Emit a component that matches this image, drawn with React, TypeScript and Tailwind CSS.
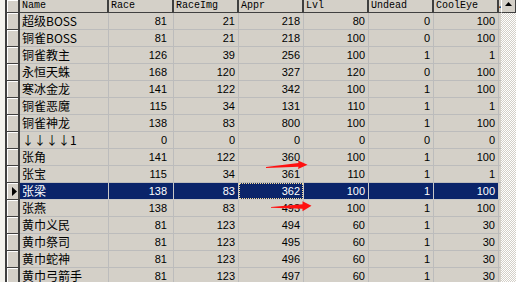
import React from "react";

type Row = [string, number, number, number, number, number, number];

const rows: Row[] = [
  ["超级BOSS", 81, 21, 218, 80, 0, 100],
  ["铜雀BOSS", 81, 21, 218, 100, 0, 100],
  ["铜雀教主", 126, 39, 256, 100, 1, 1],
  ["永恒天蛛", 168, 120, 327, 120, 0, 100],
  ["寒冰金龙", 141, 122, 342, 100, 1, 100],
  ["铜雀恶魔", 115, 34, 131, 110, 1, 1],
  ["铜雀神龙", 138, 83, 800, 100, 1, 100],
  ["↓↓↓↓1", 0, 0, 0, 0, 0, 0],
  ["张角", 141, 122, 360, 100, 1, 100],
  ["张宝", 115, 34, 361, 110, 1, 1],
  ["张梁", 138, 83, 362, 100, 1, 100],
  ["张燕", 138, 83, 493, 100, 1, 100],
  ["黄巾义民", 81, 123, 494, 60, 1, 30],
  ["黄巾祭司", 81, 123, 495, 60, 1, 30],
  ["黄巾蛇神", 81, 123, 496, 60, 1, 30],
  ["黄巾弓箭手", 81, 123, 497, 60, 1, 30],
];

const SELECTED = 10;
const HEADERS = ["Name", "Race", "RaceImg", "Appr", "Lvl", "Undead", "CoolEye"];
const GRID = "grid grid-cols-[13px_89px_65px_65px_65px_65px_65px_65px_2px]";

function Indicator({ selected, header }: { selected?: boolean; header?: boolean }) {
  return (
    <div
      className={`border-r-2 border-b border-[#404040] bg-[#d4d0c8] ${header ? "h-[13px]" : "h-[17px]"}`}
    >
      <div className="h-full border-t border-l border-white flex items-center pl-[4px]">
        {selected && (
          <svg width="5" height="9" viewBox="0 0 5 9">
            <polygon points="0,0 5,4.5 0,9" fill="#000" />
          </svg>
        )}
      </div>
    </div>
  );
}

export default function App() {
  return (
    <div className="relative w-[516px] h-[282px] overflow-hidden bg-[#f4f3ee] flex">
      <div className="w-[5px] shrink-0" />
      <div className="border-l-2 border-[#404040] flex flex-col">
        <div className={GRID}>
          <Indicator header />
          {HEADERS.map((h) => (
            <div
              key={h}
              className="h-[13px] border-r-2 border-b border-[#404040] bg-[#d4d0c8] overflow-hidden pl-[2px] font-['Liberation_Mono',monospace] text-[10px] leading-[12px] text-black whitespace-nowrap"
            >
              {h}
            </div>
          ))}
          <div className="h-[13px] border-b border-[#404040] bg-[#d4d0c8] overflow-hidden font-['Liberation_Mono',monospace] text-[10px] leading-[12px] text-black">
            <span className="block -ml-[2px]">.</span>
          </div>
        </div>
        {rows.map((r, i) => {
          const sel = i === SELECTED;
          const cellBase = `h-[17px] border-r border-b flex items-center overflow-hidden whitespace-nowrap ${
            sel ? "bg-[#0a246a] text-white border-[#c8c8c8]" : "bg-[#d4d0c8] text-black border-[#bcbcbc]"
          }`;
          const num = `${cellBase} justify-end font-['Liberation_Sans',Arial,sans-serif] text-[11px]`;
          return (
            <div key={i} className={GRID}>
              <Indicator selected={sel} />
              <div className={`${cellBase} pl-[2px] font-['SimSun','Noto_Sans_CJK_SC',sans-serif] text-[12px]`}>
                {r[0]}
              </div>
              <div className={`${num} pr-[6px]`}>{r[1]}</div>
              <div className={`${num} pr-[3px]`}>{r[2]}</div>
              <div className={`${num} ${sel ? "p-0" : "pr-[3px]"}`}>
                {sel ? (
                  <div className="w-full h-full border border-dotted border-[#f5db95] flex items-center justify-end pr-[2px]">
                    {r[3]}
                  </div>
                ) : (
                  r[3]
                )}
              </div>
              <div className={`${num} pr-[3px]`}>{r[4]}</div>
              <div className={`${num} pr-[3px]`}>{r[5]}</div>
              <div className={`${num} pr-[3px]`}>{r[6]}</div>
              <div className="h-[17px] border-b border-[#bcbcbc] bg-[#d4d0c8]" />
            </div>
          );
        })}
      </div>
      <div className="w-[15px] shrink-0 flex flex-col">
        <div className="h-[13px] shrink-0 bg-[#d4d0c8] border-l border-white border-b border-r border-b-[#404040] border-r-[#404040] flex justify-center pt-[2px]">
          <svg width="7" height="4" viewBox="0 0 7 4">
            <polygon points="3.5,0 7,4 0,4" fill="#000" />
          </svg>
        </div>
        <div className="flex-1 bg-[repeating-conic-gradient(#d4d0c8_0%_25%,#ffffff_0%_50%)] bg-[length:2px_2px]" />
      </div>
      <svg className="absolute inset-0 pointer-events-none" width="516" height="282" viewBox="0 0 516 282">
        <polygon
          points="266,167 298.5,163 298,160.5 307.5,164.7 298,169 298.5,166.7 266,168"
          fill="#ff1010"
        />
        <polygon
          points="271,207 302.5,204.3 302.5,201.3 311.5,205.7 302.5,211.3 302.5,208.7 271,207.8"
          fill="#ff1010"
        />
      </svg>
    </div>
  );
}
